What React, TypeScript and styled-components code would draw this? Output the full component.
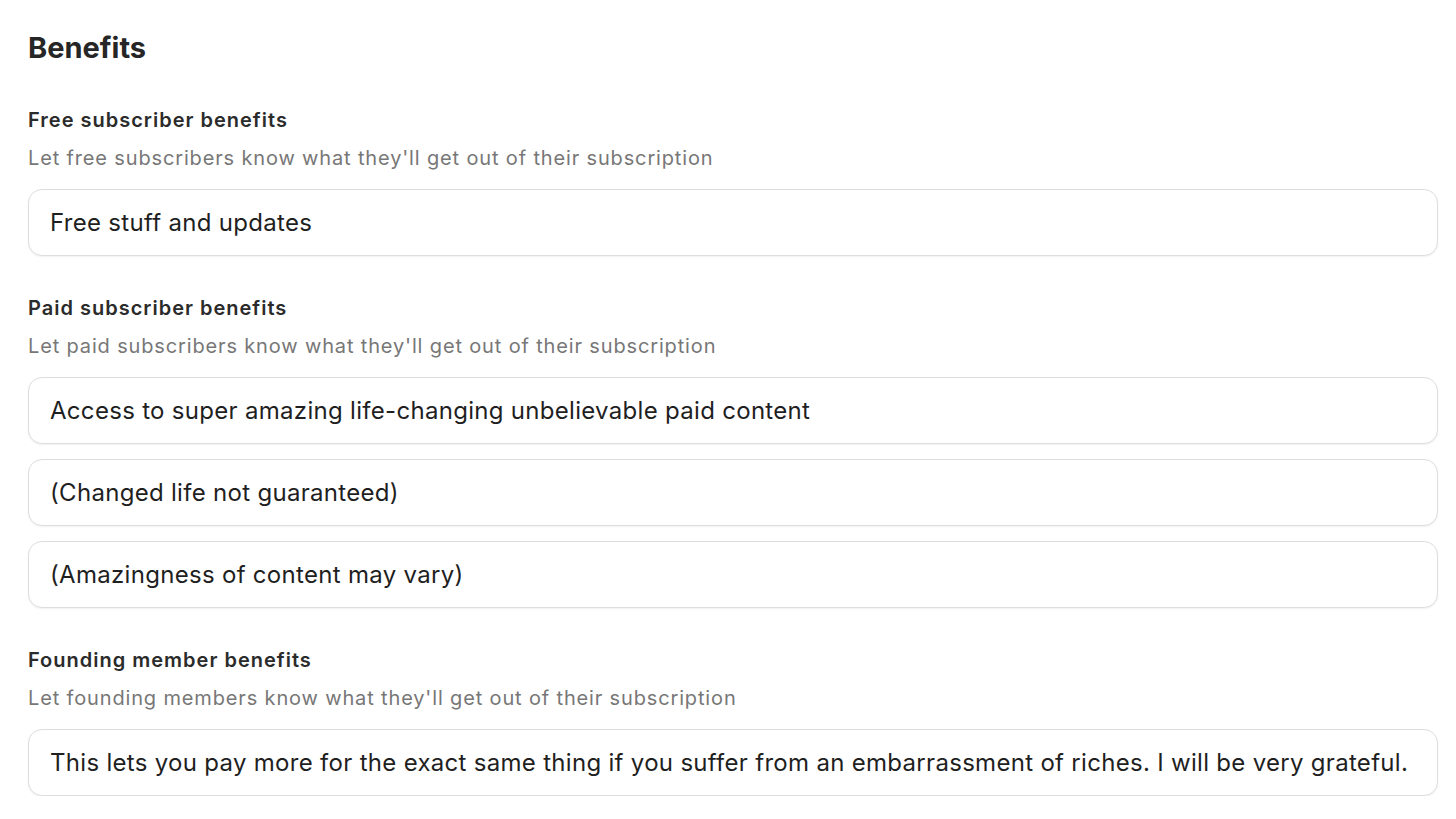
import { createGlobalStyle, styled } from "styled-components";

const sections = [
  {
    title: "Free subscriber benefits",
    hint: "Let free subscribers know what they'll get out of their subscription",
    items: ["Free stuff and updates"],
  },
  {
    title: "Paid subscriber benefits",
    hint: "Let paid subscribers know what they'll get out of their subscription",
    items: [
      "Access to super amazing life-changing unbelievable paid content",
      "(Changed life not guaranteed)",
      "(Amazingness of content may vary)",
    ],
  },
  {
    title: "Founding member benefits",
    hint: "Let founding members know what they'll get out of their subscription",
    items: [
      "This lets you pay more for the exact same thing if you suffer from an embarrassment of riches. I will be very grateful.",
    ],
  },
];

const App = () => {
  return (
    <>
      <GlobalStyle />
      <Wrapper>
        <Heading>Benefits</Heading>

        <Sections>
          {sections.map((section) => (
            <Section key={section.title}>
              <Label>{section.title}</Label>
              <Hint>{section.hint}</Hint>

              <Fields>
                {section.items.map((item) => (
                  <Field key={item} defaultValue={item} />
                ))}
              </Fields>
            </Section>
          ))}
        </Sections>
      </Wrapper>
    </>
  );
};

export default App;

const GlobalStyle = createGlobalStyle`
  body {
    margin: 0;
    background: #fff;
    font-family: Inter, "Noto Sans", sans-serif;
    -webkit-font-smoothing: antialiased;
  }
`;

const Wrapper = styled.div`
  padding: 30px 18px 0 28px;
`;

const Heading = styled.h1`
  margin: 0 0 40px;
  font-size: 29px;
  line-height: 36px;
  font-weight: 700;
  color: #262626;
`;

const Sections = styled.div`
  display: flex;
  flex-direction: column;
  gap: 38px;
`;

const Section = styled.section`
  display: flex;
  flex-direction: column;
`;

const Label = styled.h3`
  margin: 0 0 10px;
  font-size: 20px;
  line-height: 28px;
  font-weight: 600;
  letter-spacing: 1px;
  color: #2b2b2b;
`;

const Hint = styled.p`
  margin: 0 0 17px;
  font-size: 20px;
  line-height: 28px;
  letter-spacing: 0.85px;
  color: #777;
`;

const Fields = styled.div`
  display: flex;
  flex-direction: column;
  gap: 15px;
`;

const Field = styled.input`
  box-sizing: border-box;
  width: 100%;
  height: 67px;
  padding: 0 21px;
  border: 1px solid #dedede;
  border-radius: 14px;
  box-shadow: 0 1px 2px rgba(0, 0, 0, 0.06);
  background: #fff;
  font-family: inherit;
  font-size: 24px;
  letter-spacing: 0.3px;
  color: #1f1f1f;
  outline: none;
`;
